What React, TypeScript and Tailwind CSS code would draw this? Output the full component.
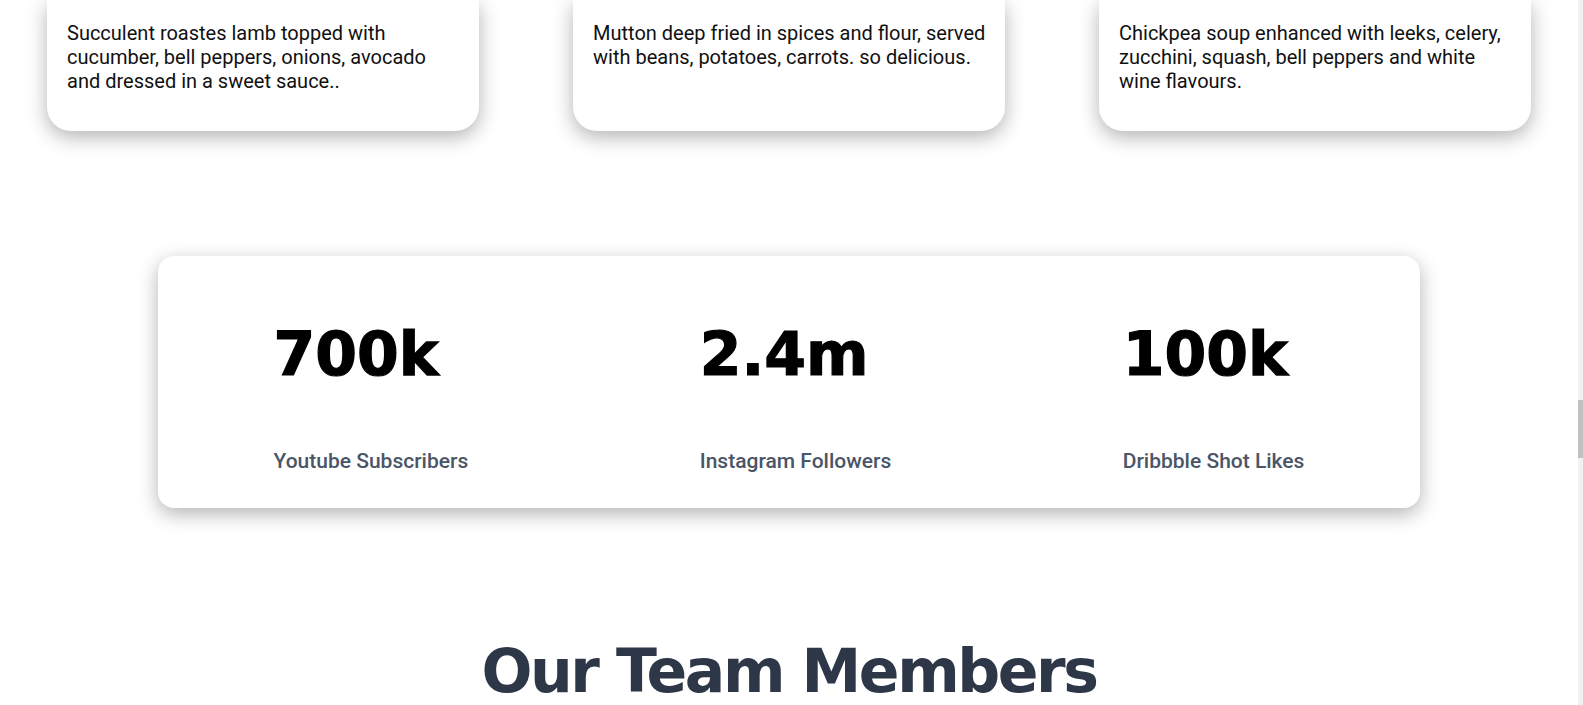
const dishes = [
  [
    "Succulent roastes lamb topped with",
    "cucumber, bell peppers, onions, avocado",
    "and dressed in a sweet sauce..",
  ],
  [
    "Mutton deep fried in spices and flour, served",
    "with beans, potatoes, carrots. so delicious.",
  ],
  [
    "Chickpea soup enhanced with leeks, celery,",
    "zucchini, squash, bell peppers and white",
    "wine flavours.",
  ],
];

const stats = [
  { value: "700k", label: "Youtube Subscribers" },
  { value: "2.4m", label: "Instagram Followers" },
  { value: "100k", label: "Dribbble Shot Likes" },
];

const App = () => {
  return (
    <div className="flex h-[705px] overflow-hidden bg-white font-['Roboto',sans-serif]">
      <main className="flex-1">
        <section className="grid grid-cols-3 gap-[94px] px-[47px]">
          {dishes.map((lines, i) => (
            <div
              key={i}
              className="rounded-b-3xl bg-white px-5 pt-[21px] pb-[38px] text-[20px] leading-6 text-[#111] shadow-[0_6px_20px_rgba(0,0,0,0.3)]"
            >
              {lines.map((line) => (
                <p key={line} className="whitespace-nowrap">
                  {line}
                </p>
              ))}
            </div>
          ))}
        </section>

        <section className="mx-auto mt-[125px] flex w-4/5 justify-around rounded-2xl bg-white pt-[68px] pb-[33px] shadow-[0_6px_20px_rgba(0,0,0,0.3)]">
          {stats.map((item) => (
            <div key={item.label} className="flex flex-col items-start">
              <p className="font-['DejaVu_Sans',sans-serif] text-[60px] leading-none font-bold text-black [-webkit-text-stroke:1.2px_#000]">
                {item.value}
              </p>
              <p className="mt-[63px] text-[21px] leading-7 font-medium text-[#4a5568]">
                {item.label}
              </p>
            </div>
          ))}
        </section>

        <h2 className="mt-[133px] text-center font-['DejaVu_Sans',sans-serif] text-[60px] leading-none font-bold tracking-[-2.4px] text-[#2d3748]">
          Our Team Members
        </h2>
      </main>
      <div className="w-[5px] bg-[#f1f1f1] pt-[400px]">
        <div className="h-[58px] bg-[#c1c1c1]" />
      </div>
    </div>
  );
};

export default App;
